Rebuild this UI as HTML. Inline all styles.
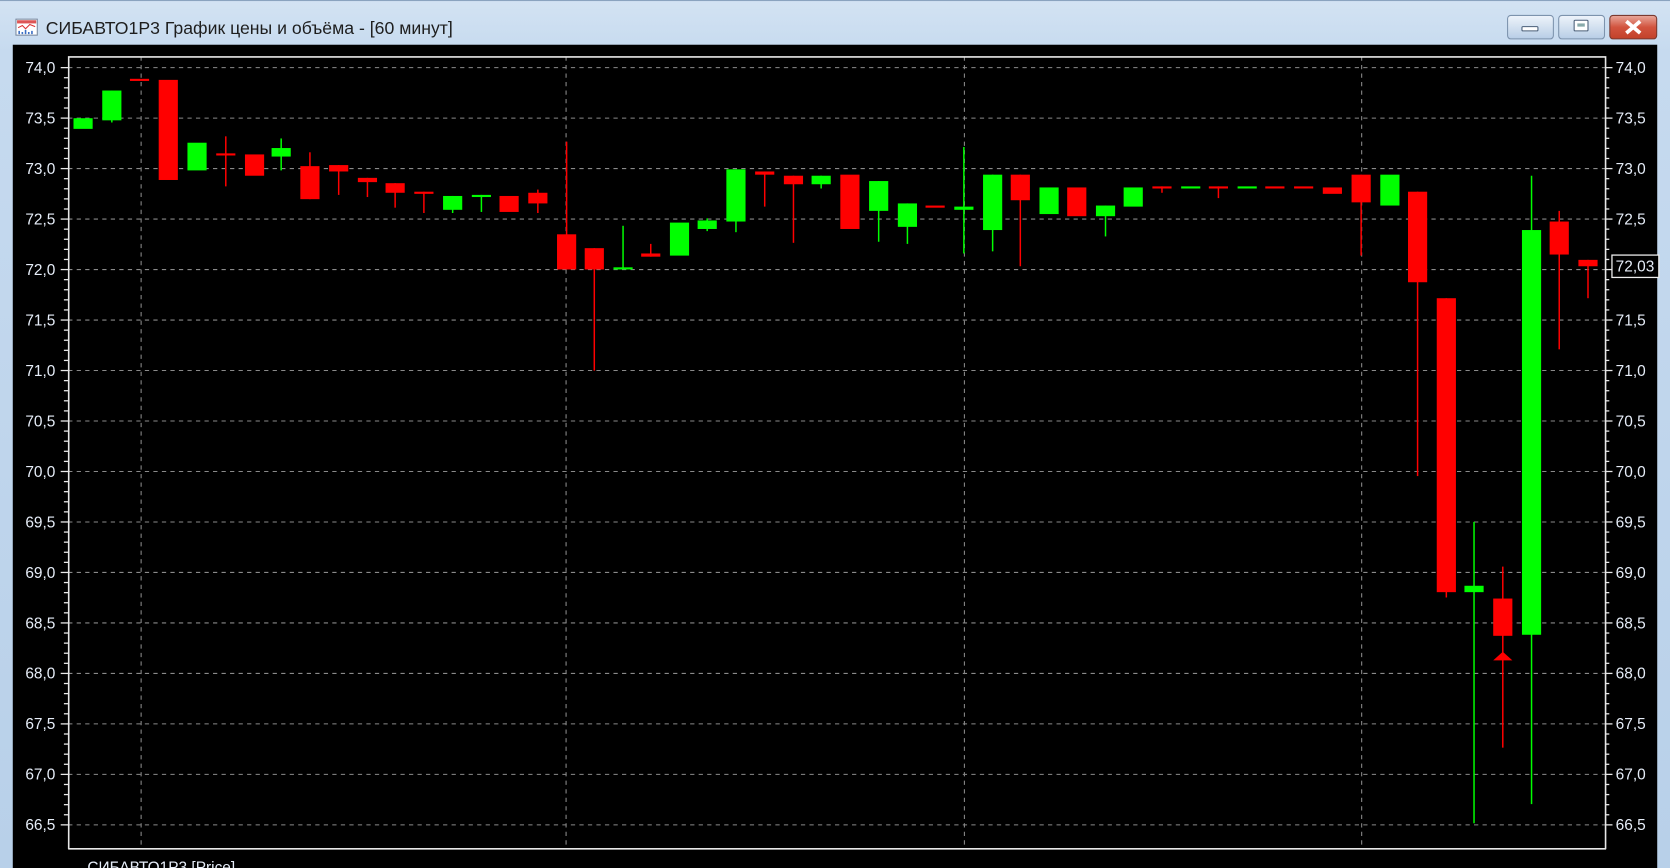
<!DOCTYPE html>
<html><head><meta charset="utf-8"><style>
html,body{margin:0;padding:0;background:#bcd3ea;overflow:hidden}
svg{display:block}
text{font-family:"Liberation Sans","DejaVu Sans",sans-serif}
</style></head><body>
<svg width="1670" height="868" viewBox="0 0 1568 815" preserveAspectRatio="none" xmlns="http://www.w3.org/2000/svg">
<defs>
<linearGradient id="tb" x1="0" y1="0" x2="0" y2="1"><stop offset="0" stop-color="#d3e3f3"/><stop offset="0.06" stop-color="#c6daef"/><stop offset="1" stop-color="#b8d0e9"/></linearGradient>
<linearGradient id="btn" x1="0" y1="0" x2="0" y2="1"><stop offset="0" stop-color="#eef4fb"/><stop offset="0.5" stop-color="#d3e1f0"/><stop offset="1" stop-color="#b7cde6"/></linearGradient>
<linearGradient id="cls" x1="0" y1="0" x2="0" y2="1"><stop offset="0" stop-color="#e9a99c"/><stop offset="0.5" stop-color="#d2543f"/><stop offset="1" stop-color="#c2412a"/></linearGradient>
</defs>
<rect width="1568" height="815" fill="url(#tb)"/>
<rect x="0" y="0" width="1568" height="1" fill="#8aa3bf"/>
<rect x="15" y="18" width="20" height="15" fill="#fff" stroke="#7a8aa0"/>
<rect x="16" y="19" width="18" height="3" fill="#d55"/>
<polyline points="17,26 21,24 24,27 28,23 33,25" fill="none" stroke="#d33" stroke-width="1"/>
<path d="M18 32v-3M21 32v-2M24 32v-4M27 32v-2M30 32v-3" stroke="#3a6fc4" stroke-width="1.5"/>
<text x="43" y="32" font-size="16.6" fill="#1e1e1e">СИБАВТО1Р3 График цены и объёма - [60 минут]</text>
<rect x="1415.5" y="14.5" width="43" height="22" rx="3" fill="url(#btn)" stroke="#7d93ad"/>
<rect x="1429" y="25" width="15" height="4" rx="1" fill="#fff" stroke="#4b5f78"/>
<rect x="1463.5" y="14.5" width="43" height="22" rx="3" fill="url(#btn)" stroke="#7d93ad"/>
<rect x="1478" y="19" width="13" height="10" rx="1" fill="#fff" stroke="#4b5f78"/>
<rect x="1481" y="22" width="7" height="3" fill="#8aa"/>
<rect x="1511.5" y="14.5" width="44" height="22" rx="3" fill="url(#cls)" stroke="#7a3a30"/>
<path d="M1527 20l13 11M1540 20l-13 11" stroke="#fff" stroke-width="3.5"/>
<rect x="12" y="42" width="1544" height="773" fill="#000"/>
<g stroke="#8a8a8a" stroke-width="1" stroke-dasharray="4,4">
<line x1="64" x2="1507" y1="63.5" y2="63.5"/><line x1="64" x2="1507" y1="110.9" y2="110.9"/><line x1="64" x2="1507" y1="158.3" y2="158.3"/><line x1="64" x2="1507" y1="205.7" y2="205.7"/><line x1="64" x2="1507" y1="253.1" y2="253.1"/><line x1="64" x2="1507" y1="300.5" y2="300.5"/><line x1="64" x2="1507" y1="347.9" y2="347.9"/><line x1="64" x2="1507" y1="395.3" y2="395.3"/><line x1="64" x2="1507" y1="442.7" y2="442.7"/><line x1="64" x2="1507" y1="490.1" y2="490.1"/><line x1="64" x2="1507" y1="537.5" y2="537.5"/><line x1="64" x2="1507" y1="584.9" y2="584.9"/><line x1="64" x2="1507" y1="632.3" y2="632.3"/><line x1="64" x2="1507" y1="679.7" y2="679.7"/><line x1="64" x2="1507" y1="727.1" y2="727.1"/><line x1="64" x2="1507" y1="774.5" y2="774.5"/>
<line x1="132.5" x2="132.5" y1="53" y2="797"/><line x1="531.5" x2="531.5" y1="53" y2="797"/><line x1="905.5" x2="905.5" y1="53" y2="797"/><line x1="1278.5" x2="1278.5" y1="53" y2="797"/>
</g>
<polyline points="64.5,797 64.5,53.5 1507.5,53.5 1507.5,797" fill="none" stroke="#e8e8e8" stroke-width="1.5"/>
<line x1="64" x2="1508" y1="797" y2="797" stroke="#e8e8e8" stroke-width="1.5"/>
<g stroke="#e8e8e8" stroke-width="1.2" id="ticks"></g>
<g font-size="14.5" fill="#e6edf8" id="labels"></g>
<g id="c"></g>
<rect x="1513.5" y="239.5" width="44" height="21" fill="#000" stroke="#eee" stroke-width="1.2"/>
<text x="1517" y="255" font-size="14.5" fill="#e6edf8">72,03</text>
<text x="82" y="819" font-size="14.5" fill="#e6edf8">СИБАВТО1Р3 [Price]</text>
</svg>
<script>
var NS="http://www.w3.org/2000/svg";
function el(p,t,a){var e=document.createElementNS(NS,t);for(var k in a)e.setAttribute(k,a[k]);p.appendChild(e);return e;}
var tk=document.getElementById("ticks"),lb=document.getElementById("labels");
for(var i=0;i<=75;i++){var y=63.5+i*9.48;var maj=i%5==0;
el(tk,"line",{x1:maj?57:60,x2:64,y1:y,y2:y});el(tk,"line",{x1:1507,x2:maj?1514:1511,y1:y,y2:y});
if(maj){var v=(74-i/10).toFixed(1).replace(".",",");
var t=el(lb,"text",{x:52,y:y+5,"text-anchor":"end"});t.textContent=v;
var t2=el(lb,"text",{x:1517,y:y+5});t2.textContent=v;}}
var C=[[78,"G",111,121],[105,"G",85,113,85,115],[131,"R",74,76],[158,"R",75,169],[185,"G",134,160],[212,"R",144,146,128,175],[239,"R",145,165],[264,"G",139,147,130,160],[291,"R",156,187,143,187],[318,"R",155,161,155,183],[345,"R",167,171,167,185],[371,"R",172,181,172,195],[398,"R",180,182,180,200],[425,"G",184,197,184,200],[452,"G",183,185,183,199],[478,"R",184,199],[505,"R",181,191,178,200],[532,"R",220,253,133,253],[558,"R",233,253,233,348],[585,"G",251,253,212,253],[611,"R",238,241,229,241],[638,"G",209,240],[664,"G",207,215,205,217],[691,"G",159,208,159,218],[718,"R",161,164,161,194],[745,"R",165,173,165,228],[771,"G",165,173,165,177],[798,"R",164,215],[825,"G",170,198,170,227],[852,"G",191,213,191,229],[878,"R",193,195],[905,"G",194,197,138,238],[932,"G",164,216,164,236],[958,"R",164,188,164,250],[985,"G",176,201],[1011,"R",176,203],[1038,"G",193,203,193,222],[1064,"G",176,194],[1091,"R",175,177,175,181],[1118,"G",175,177],[1144,"R",175,177,175,186],[1171,"G",175,177],[1197,"R",175,177],[1224,"R",175,177],[1251,"R",176,182],[1278,"R",164,190,164,240],[1305,"G",164,193],[1331,"R",180,265,180,447],[1358,"R",280,556,280,561],[1384,"G",550,556,490,773],[1411,"R",562,597,532,702],[1438,"G",216,596,165,755],[1464,"R",208,239,198,328],[1491,"R",244,250,244,280]];
var g=document.getElementById("c");
C.forEach(function(c){var col=c[1]=="G"?"#00ff00":"#ff0000";
if(c.length>4)el(g,"rect",{x:c[0]-0.7,y:c[4],width:1.4,height:c[5]-c[4],fill:col});
el(g,"rect",{x:c[0]-9,y:c[2],width:18,height:Math.max(2,c[3]-c[2]),fill:col});});
el(g,"polygon",{points:"1402,620 1420,620 1411,612",fill:"#ff0000"});
</script>
</body></html>
